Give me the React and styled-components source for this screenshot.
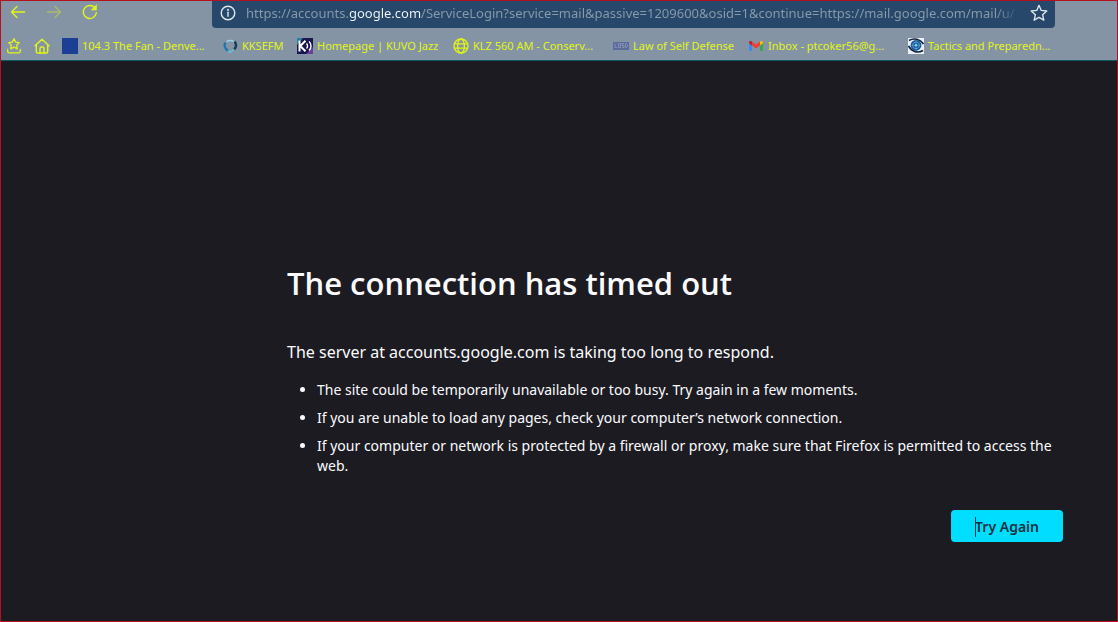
import React, { useState } from "react";
import styled, { createGlobalStyle } from "styled-components";

const GlobalStyle = createGlobalStyle`
  * {
    box-sizing: border-box;
  }
  body {
    margin: 0;
    background: #1c1b22;
    font-family: "Noto Sans", "Open Sans", sans-serif;
  }
`;

const Window = styled.div`
  display: flex;
  flex-direction: column;
  min-height: 100vh;
  border: 1px solid #b5121f;
  background: #1c1b22;
`;

const Chrome = styled.header`
  background: #8494a4;
  border-bottom: 1px solid #0f5a60;
`;

const NavBar = styled.div`
  display: flex;
  align-items: flex-start;
  height: 27px;
  padding-right: 62px;
`;

const NavButtons = styled.div`
  display: flex;
  gap: 12px;
  width: 211px;
  padding-left: 5px;
`;

const IconButton = styled.button`
  display: flex;
  align-items: center;
  justify-content: center;
  width: 24px;
  height: 22px;
  padding: 0;
  border: 0;
  background: none;
  color: ${(props) => props.$color || "#e2f516"};
  opacity: ${(props) => (props.disabled ? 0.4 : 1)};
`;

const UrlBar = styled.div`
  display: flex;
  flex: 1;
  align-items: center;
  height: 27px;
  padding: 0 4px 4px;
  border-radius: 0 0 4px 4px;
  background: #27486a;
`;

/* the host part of the address is brighter, and the end fades out */
const UrlInput = styled.input`
  flex: 1;
  min-width: 0;
  height: 22px;
  margin-left: 6px;
  padding: 0;
  border: 0;
  outline: 0;
  font-family: inherit;
  font-size: 13px;
  color: transparent;
  background: linear-gradient(
    90deg,
    #8a9bac 102px,
    #f4f8fb 102px,
    #f4f8fb 175px,
    #8a9bac 175px,
    #8a9bac calc(100% - 32px),
    #27486a calc(100% - 6px)
  );
  background-clip: text;
  -webkit-background-clip: text;
`;

const BookmarksBar = styled.nav`
  display: grid;
  grid-template-columns: 28px 28px 160px 75px 156px 160px 135px 160px 1fr;
  align-items: center;
  height: 32px;
  padding: 4px 0 0 5px;
`;

const Bookmark = styled.a`
  display: flex;
  align-items: center;
  gap: 4px;
  color: #e2f516;
  font-size: 11px;
  line-height: 20px;
  text-decoration: none;
  white-space: nowrap;

  svg {
    flex: none;
  }
`;

const ErrorPage = styled.main`
  flex: 1;
  padding: 195px 54px 40px 286px;
  color: #fbfbfe;
`;

const Title = styled.h1`
  margin: 0 0 30px;
  font-family: "Open Sans", "Noto Sans", sans-serif;
  font-size: 31px;
  font-weight: 600;
  line-height: 54px;
`;

const Intro = styled.p`
  margin: 0 0 16px;
  font-size: 16px;
  line-height: 24px;
`;

const Reasons = styled.ul`
  margin: 0;
  padding-left: 30px;
  font-size: 14px;
  line-height: 20px;
`;

const Reason = styled.li`
  margin-bottom: 8px;
`;

const Actions = styled.div`
  display: flex;
  justify-content: flex-end;
  padding-top: 26px;
`;

const TryAgain = styled.button`
  height: 32px;
  padding: 0 24px;
  border: 0;
  border-radius: 4px;
  background: #00ddff;
  color: #15303d;
  font-family: inherit;
  font-size: 14px;
  font-weight: 600;
`;

const ButtonLabel = styled.span`
  position: relative;

  &::before {
    content: "";
    position: absolute;
    left: 0;
    top: 0;
    width: 1px;
    height: 20px;
    background: #15303d;
  }
`;

const Line = ({ size = 16, width = 1.4, children }) => (
  <svg
    width={size}
    height={size}
    viewBox="0 0 16 16"
    fill="none"
    stroke="currentColor"
    strokeWidth={width}
    strokeLinecap="round"
    strokeLinejoin="round"
    aria-hidden="true"
  >
    {children}
  </svg>
);

const BackIcon = () => (
  <Line>
    <path d="M14.5 8H1.5M7 2.5 1.5 8 7 13.5" />
  </Line>
);

const ForwardIcon = () => (
  <Line>
    <path d="M1.5 8h13M9 2.5 14.5 8 9 13.5" />
  </Line>
);

const ReloadIcon = () => (
  <Line>
    <path d="M14.3 8.8A6.5 6.5 0 1 1 12.6 3.5" />
    <path d="M14.5 1v5H9.5z" fill="currentColor" strokeWidth="0.6" />
  </Line>
);

const InfoIcon = () => (
  <Line>
    <circle cx="8" cy="8" r="6.8" />
    <path d="M8 7.3v4" />
    <circle cx="8" cy="4.8" r="0.4" />
  </Line>
);

const StarIcon = () => (
  <Line size={18} width={1.2}>
    <path d="M8 1.2 10 5.7l4.9.5-3.7 3.3 1.1 4.9L8 11.900l-4.300 2.500 1.100-4.900L1.100 6.200 6 5.700z" />
  </Line>
);

const BookmarkTrayIcon = () => (
  <Line width={1.3}>
    <path d="M8 .8 9.700 4.100l3.600.5-2.600 2.600.6 3.600L8 9.100l-3.300 1.700.6-3.600L2.700 4.600l3.600-.5z" />
    <path d="M1.700 11.500v1.700A1.700 1.700 0 0 0 3.400 14.900h9.200a1.700 1.700 0 0 0 1.700-1.700v-1.700" />
  </Line>
);

const HomeIcon = () => (
  <Line>
    <path d="M1 7.8 8 1.2l7 6.6M2.3 6.8V13.5A1.5 1.5 0 0 0 3.8 15h8.400a1.500 1.500 0 0 0 1.500-1.500V6.800" />
    <path d="M6 15v-4.5A1.5 1.5 0 0 1 7.5 9h1A1.5 1.5 0 0 1 10 10.5V15" />
  </Line>
);

const FanIcon = () => (
  <svg width="16" height="16" aria-hidden="true">
    <rect width="16" height="16" fill="#1b3f95" />
  </svg>
);

const RingIcon = () => (
  <svg width="16" height="16" viewBox="0 0 16 16" fill="none" aria-hidden="true">
    <path d="M3.200 4.500C1.800 7.500 3.200 11 6 12.800" stroke="#1b78ae" strokeWidth="2.400" />
    <path d="M4.500 3.600C6.800 2.200 9.500 2.200 11.800 3.600" stroke="#9bd0e2" strokeWidth="1.400" />
    <path d="M12.600 3.600c2 2.600 1.500 5.700-.4 7.700" stroke="#173c5c" strokeWidth="2.400" />
    <path d="M11.500 11.500C10.500 13 9.500 13.700 8 14.300L6 12.800" stroke="#5fc0dd" strokeWidth="1.600" />
  </svg>
);

const KuvoIcon = () => (
  <svg width="16" height="16" viewBox="0 0 16 16" aria-hidden="true">
    <rect width="16" height="16" fill="#1c1650" />
    <path d="M0 0h6L0 7z" fill="#2a7f9e" />
    <path d="M16 16h-7l7-7z" fill="#6a3f9e" />
    <g fill="none" stroke="#fff">
      <path d="M2.5 2.5v11M8.5 2.8 3.2 8l5.3 5.2" strokeWidth="2" />
      <path d="M9.5 5.5a3.5 3.5 0 0 1 0 5M12 3.5a6 6 0 0 1 0 9" strokeWidth="1.4" />
    </g>
  </svg>
);

const GlobeIcon = () => (
  <Line width={1.3}>
    <circle cx="8" cy="8" r="7" />
    <ellipse cx="8" cy="8" rx="3.4" ry="7" />
    <path d="M1.5 5.8h13M1.5 10.2h13" />
  </Line>
);

const LosdIcon = () => (
  <svg width="16" height="16" viewBox="0 0 16 16" fill="none" aria-hidden="true">
    <rect y="4" width="16" height="8" fill="#5b6c9b" />
    <path
      d="M2 5.5v4h2M5.5 5.5h2v4h-2zM11 5.5H9v2h2v2H9M12.5 5.5h1l1 1v2l-1 1h-1z"
      stroke="#8d9bbd"
      strokeWidth="0.8"
    />
  </svg>
);

const GmailIcon = () => (
  <svg width="16" height="16" viewBox="0 0 16 16" aria-hidden="true">
    <path d="M1 4.5 4 6.8V13H2a1 1 0 0 1-1-1z" fill="#4285f4" />
    <path d="M15 4.5 12 6.8V13h2a1 1 0 0 0 1-1z" fill="#34a853" />
    <path d="M4 3.5 8 6.6l4-3.1v4L8 10.5 4 7.5z" fill="#ea4335" />
    <path d="M1 4.5C1 3 2.7 2.3 4 3.5v4L1 5.3z" fill="#c5221f" />
    <path d="M15 4.5C15 3 13.3 2.3 12 3.5v4l3-2.2z" fill="#fbbc04" />
  </svg>
);

const TacticsIcon = () => (
  <svg width="16" height="16" viewBox="0 0 16 16" fill="none" aria-hidden="true">
    <rect width="16" height="16" fill="#e9eff5" />
    <path d="M1 2.5C6-.5 12 1 15.5 6M15 12.5C10 15.5 4 14 .5 8" stroke="#14233f" strokeWidth="1.6" />
    <circle cx="8" cy="7.3" r="5.4" fill="#164f91" />
    <circle cx="8" cy="7.3" r="3.4" stroke="#55a5d6" />
    <path d="M8 2.5v9.6M3.2 7.3h9.6" stroke="#55a5d6" strokeWidth="0.7" />
    <circle cx="8" cy="7.3" r="1.3" fill="#8bd0ee" />
  </svg>
);

const bookmarks = [
  { label: "104.3 The Fan - Denve...", icon: FanIcon },
  { label: "KKSEFM", icon: RingIcon },
  { label: "Homepage | KUVO Jazz", icon: KuvoIcon },
  { label: "KLZ 560 AM - Conserv...", icon: GlobeIcon },
  { label: "Law of Self Defense", icon: LosdIcon },
  { label: "Inbox - ptcoker56@g...", icon: GmailIcon },
  { label: "Tactics and Preparedn...", icon: TacticsIcon },
];

export default function App() {
  const [url, setUrl] = useState(
    "https://accounts.google.com/ServiceLogin?service=mail&passive=1209600&osid=1&continue=https://mail.google.com/mail/u/"
  );

  return (
    <Window>
      <GlobalStyle />
      <Chrome>
        <NavBar>
          <NavButtons>
            <IconButton aria-label="Back">
              <BackIcon />
            </IconButton>
            <IconButton aria-label="Forward" disabled>
              <ForwardIcon />
            </IconButton>
            <IconButton aria-label="Reload">
              <ReloadIcon />
            </IconButton>
          </NavButtons>
          <UrlBar>
            <IconButton aria-label="Site information" $color="#dfe8ef">
              <InfoIcon />
            </IconButton>
            <UrlInput
              aria-label="Address"
              value={url}
              onChange={(e) => setUrl(e.target.value)}
            />
            <IconButton aria-label="Bookmark this page" $color="#dfe8ef">
              <StarIcon />
            </IconButton>
          </UrlBar>
        </NavBar>
        <BookmarksBar>
          <Bookmark href="#" aria-label="Bookmarks">
            <BookmarkTrayIcon />
          </Bookmark>
          <Bookmark href="#" aria-label="Home">
            <HomeIcon />
          </Bookmark>
          {bookmarks.map(({ label, icon: Favicon }) => (
            <Bookmark href="#" key={label}>
              <Favicon />
              {label}
            </Bookmark>
          ))}
        </BookmarksBar>
      </Chrome>
      <ErrorPage>
        <Title>The connection has timed out</Title>
        <Intro>
          The server at accounts.google.com is taking too long to respond.
        </Intro>
        <Reasons>
          <Reason>
            The site could be temporarily unavailable or too busy. Try again in
            a few moments.
          </Reason>
          <Reason>
            If you are unable to load any pages, check your computer’s network
            connection.
          </Reason>
          <Reason>
            If your computer or network is protected by a firewall or proxy,
            make sure that Firefox is permitted to access the web.
          </Reason>
        </Reasons>
        <Actions>
          <TryAgain>
            <ButtonLabel>Try Again</ButtonLabel>
          </TryAgain>
        </Actions>
      </ErrorPage>
    </Window>
  );
}
